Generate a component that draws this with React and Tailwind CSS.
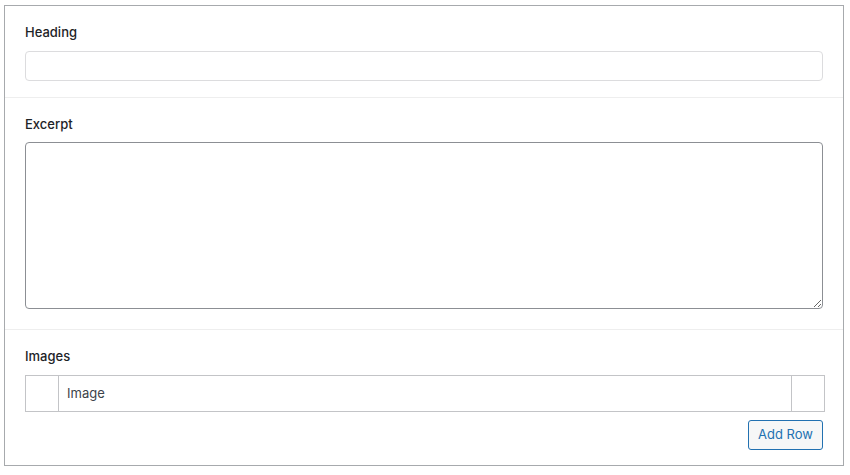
import React from 'react';

export default function App() {
  return (
    <div className="w-[850px] h-[475px] bg-white pl-[4px] pt-[5px]" style={{ fontFamily: 'Inter, "Liberation Sans", sans-serif' }}>
      <div className="w-[840px] h-[461px] border border-[#a7aaad] bg-white flex flex-col">
        {/* Heading */}
        <div className="px-5 pt-4 pb-4 border-b border-[#eeeeee]">
          <label className="block text-[13px] leading-[21px] font-medium text-[#1d2327] mb-2">Heading</label>
          <input
            type="text"
            className="block w-[798px] h-[30px] border border-[#dcdcde] rounded-[4px] bg-white px-2 outline-none"
          />
        </div>

        {/* Excerpt */}
        <div className="px-5 pt-4 pb-5 border-b border-[#eeeeee]">
          <label className="block text-[13px] leading-[21px] font-medium text-[#1d2327] mb-[7px]">Excerpt</label>
          <textarea
            className="block w-[798px] h-[167px] border border-[#8c8f94] rounded-[4px] bg-white p-2 outline-none"
          />
        </div>

        {/* Images */}
        <div className="px-5 pt-4 flex flex-col">
          <label className="block text-[13px] leading-[21px] font-medium text-[#1d2327] mb-2">Images</label>
          <div className="w-[800px] h-[37px] border border-[#c3c4c7] flex">
            <div className="w-[33px] border-r border-[#c3c4c7]"></div>
            <div className="flex-1 flex items-center pl-2 pt-[1px] text-[13px] text-[#3c434a]">Image</div>
            <div className="w-[33px] border-l border-[#c3c4c7]"></div>
          </div>
          <div className="flex justify-end w-[798px] mt-2">
            <button className="w-[75px] h-[30px] border border-[#2271b1] rounded-[3px] bg-[#f6f7f7] text-[13px] text-[#2271b1]">
              Add Row
            </button>
          </div>
        </div>
      </div>
    </div>
  );
}
